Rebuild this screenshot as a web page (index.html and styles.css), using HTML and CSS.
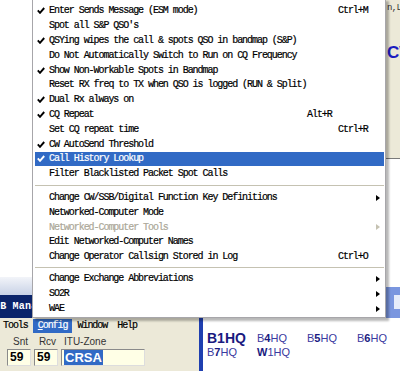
FILE: index.html
```html
<!DOCTYPE html>
<html lang="en">
    <head>
        <meta charset="UTF-8">
        <title>Config Menu</title>
        <link rel="stylesheet" href="styles.css">
    </head>
    <body>
        <div class="desktop">
            <!-- window peeking out on the right -->
            <div class="win side-win">
                <div class="side-text">n,L</div>
                <div class="side-mode">CW</div>
            </div>

            <!-- logging window -->
            <div class="win log-win">
                <div class="log-glow"></div>
                <div class="titlebar"><span class="title-text">DB Manager</span></div>
                <div class="menubar">
                    <span class="mb-item">Tools</span>
                    <span class="mb-item mb-active"><u>C</u>onfig</span>
                    <span class="mb-item">Window</span>
                    <span class="mb-item">Help</span>
                </div>
                <div class="entry">
                    <div class="field f-snt">
                        <span class="field-label">Snt</span>
                        <span class="field-box">59</span>
                    </div>
                    <div class="field f-rcv">
                        <span class="field-label">Rcv</span>
                        <span class="field-box">59</span>
                    </div>
                    <div class="field f-zone">
                        <span class="field-label">ITU-Zone</span>
                        <span class="field-box"><span class="sel">CRSA</span></span>
                    </div>
                </div>
            </div>

            <!-- check call window -->
            <div class="win call-win">
                <div class="call-title"><span class="call-btn"></span></div>
                <div class="call-body">
                    <div class="calls">
                        <span class="call big">B1HQ</span>
                        <span class="call">B<b>4</b>HQ</span>
                        <span class="call">B<b>5</b>HQ</span>
                        <span class="call">B<b>6</b>HQ</span>
                        <span class="call">B<b>7</b>HQ</span>
                        <span class="call"><b>W</b>1HQ</span>
                    </div>
                </div>
            </div>

            <!-- Config popup menu -->
            <div class="popup">
                <div class="mi"><span class="chk"></span><span class="lbl">Enter Sends Message (ESM mode)</span><span class="key">Ctrl+M</span></div>
                <div class="mi"><span></span><span class="lbl">Spot all S&amp;P QSO's</span><span></span></div>
                <div class="mi"><span class="chk"></span><span class="lbl">QSYing wipes the call &amp; spots QSO in bandmap (S&amp;P)</span><span></span></div>
                <div class="mi"><span></span><span class="lbl">Do Not Automatically Switch to Run on CQ Frequency</span><span></span></div>
                <div class="mi"><span class="chk"></span><span class="lbl">Show Non-Workable Spots in Bandmap</span><span></span></div>
                <div class="mi"><span></span><span class="lbl">Reset RX freq to TX when QSO is logged (RUN &amp; Split)</span><span></span></div>
                <div class="mi"><span class="chk"></span><span class="lbl">Dual Rx always on</span><span></span></div>
                <div class="mi"><span class="chk"></span><span class="lbl">CQ Repeat</span><span class="key key-early">Alt+R</span></div>
                <div class="mi"><span></span><span class="lbl">Set CQ repeat time</span><span class="key">Ctrl+R</span></div>
                <div class="mi"><span class="chk"></span><span class="lbl">CW AutoSend Threshold</span><span></span></div>
                <div class="mi mi-hot"><span class="chk"></span><span class="lbl">Call History Lookup</span><span></span></div>
                <div class="mi"><span></span><span class="lbl">Filter Blacklisted Packet Spot Calls</span><span></span></div>
                <div class="sep"></div>
                <div class="mi"><span></span><span class="lbl">Change CW/SSB/Digital Function Key Definitions</span><span class="sub"></span></div>
                <div class="mi"><span></span><span class="lbl">Networked-Computer Mode</span><span></span></div>
                <div class="mi mi-off"><span></span><span class="lbl">Networked-Computer Tools</span><span class="sub"></span></div>
                <div class="mi"><span></span><span class="lbl">Edit Networked-Computer Names</span><span></span></div>
                <div class="mi"><span></span><span class="lbl">Change Operator Callsign Stored in Log</span><span class="key">Ctrl+O</span></div>
                <div class="sep sep-2"></div>
                <div class="mi"><span></span><span class="lbl">Change Exchange Abbreviations</span><span class="sub"></span></div>
                <div class="mi"><span></span><span class="lbl">SO2R</span><span class="sub"></span></div>
                <div class="mi"><span></span><span class="lbl">WAE</span><span class="sub"></span></div>
            </div>
        </div>
    </body>
</html>
```

FILE: styles.css
```css
* {
    box-sizing: border-box;
}
body {
    margin: 0;
    background: #fff;
}
.desktop {
    position: relative;
    width: 400px;
    height: 371px;
    overflow: hidden;
    background: #fff;
    font-family: "Liberation Mono", monospace;
}
.win {
    position: absolute;
}

/* right hand window */
.side-win {
    left: 386px;
    top: 0;
    width: 30px;
    height: 159px;
    background: #ece9d8;
    border-bottom: 1px solid #7a7a7a;
}
.side-text {
    font-size: 9px;
    letter-spacing: -0.6px;
    color: #333;
    padding: 3px 0 0 1px;
}
.side-mode {
    font-family: "Liberation Sans", sans-serif;
    font-weight: bold;
    font-size: 17px;
    color: #1c1cc0;
    margin-top: 30px;
    padding-left: 1px;
}

/* logging window */
.log-win {
    left: 0;
    top: 277px;
    width: 200px;
    height: 94px;
    background: #ece9d8;
    display: flex;
    flex-direction: column;
}
.log-glow {
    height: 18px;
    background: linear-gradient(#f2f4f9, #c8d2e6);
}
.titlebar {
    height: 23px;
    background: #0a246a;
    display: flex;
    align-items: center;
}
.title-text {
    color: #fff;
    font-weight: bold;
    font-size: 10px;
    letter-spacing: 0.2px;
    margin-left: -6px;
    white-space: nowrap;
}
.menubar {
    height: 16px;
    display: flex;
    align-items: center;
    margin-left: -2px;
    font-size: 10px;
    letter-spacing: -1.05px;
    -webkit-text-stroke: 0.2px #000;
}
.mb-item {
    padding: 0 5px;
    height: 14px;
    line-height: 14px;
}
.mb-active {
    background: #316ac5;
    color: #fff;
    -webkit-text-stroke: 0.2px #fff;
}
.entry {
    display: flex;
    gap: 3px;
    padding: 2px 0 0 7px;
    font-family: "Liberation Sans", sans-serif;
}
.field {
    display: flex;
    flex-direction: column;
}
.field-label {
    font-size: 10px;
    color: #333;
    text-align: center;
    height: 13px;
    padding-left: 3px;
}
.field-box {
    height: 17px;
    background: #ffffe6;
    border: 1px solid #8a8a8a;
    border-right-color: #ddd;
    border-bottom-color: #ddd;
    font-size: 12px;
    font-weight: bold;
    padding-left: 2px;
    line-height: 15px;
}
.f-snt, .f-rcv {
    width: 24px;
}
.f-zone {
    width: 84px;
}
.f-zone .field-label {
    text-align: left;
}
.sel {
    background: #316ac5;
    color: #fff;
    padding: 0 1px;
    font-size: 13px;
}

/* check call window */
.call-win {
    left: 199px;
    top: 287px;
    width: 201px;
    height: 84px;
}
.call-title {
    height: 31px;
    background: #7a96df;
    position: relative;
}
.call-btn {
    position: absolute;
    right: 0;
    top: 8px;
    width: 6px;
    height: 14px;
    background: #e6ecfa;
}
.call-body {
    height: 53px;
    background: #fff;
    border-left: 4px solid #1f3fb0;
}
.calls {
    display: grid;
    grid-template-columns: repeat(4, 50px);
    padding: 13px 0 0 4px;
    font-family: "Liberation Sans", sans-serif;
    font-size: 11px;
    color: #3a3aa0;
    line-height: 14px;
}
.call b {
    color: #1a1a80;
}
.call.big {
    font-size: 14px;
    font-weight: bold;
    color: #1a1a80;
}

/* popup menu */
.popup {
    position: absolute;
    left: 32px;
    top: -2px;
    width: 354px;
    background: #fff;
    border: 1px solid #a7a6aa;
    padding: 4.6px 1px 1px 2px;
    box-shadow: 3px 3px 2px rgba(0, 0, 0, 0.28);
    font-size: 10px;
    letter-spacing: -1.05px;
    -webkit-text-stroke: 0.2px #000;
    color: #000;
}
.mi {
    display: grid;
    grid-template-columns: 14px 1fr 46px;
    align-items: center;
    height: 14.8px;
    white-space: nowrap;
}
.chk {
    width: 8px;
    height: 7px;
    margin-left: 2px;
    background: url("data:image/svg+xml;utf8,<svg xmlns='http://www.w3.org/2000/svg' viewBox='0 0 8 7'><path d='M0.8 3.4 L3 5.8 L7.2 1' fill='none' stroke='black' stroke-width='1.9'/></svg>") no-repeat;
}
.mi-hot {
    background: #316ac5;
    color: #fff;
    -webkit-text-stroke: 0.2px #fff;
}
.mi-hot .chk {
    background: url("data:image/svg+xml;utf8,<svg xmlns='http://www.w3.org/2000/svg' viewBox='0 0 8 7'><path d='M0.8 3.4 L3 5.8 L7.2 1' fill='none' stroke='white' stroke-width='1.9'/></svg>") no-repeat;
}
.mi-off {
    color: #aca899;
    -webkit-text-stroke: 0.2px #aca899;
}
.key-early {
    margin-left: -31px;
}
.sub {
    justify-self: end;
    margin-right: 4px;
    width: 0;
    height: 0;
    border-top: 3.5px solid transparent;
    border-bottom: 3.5px solid transparent;
    border-left: 4px solid #000;
}
.mi-off .sub {
    border-left-color: #c5c2b2;
}
.sep {
    height: 9px;
    display: flex;
    align-items: center;
}
.sep::before {
    content: "";
    flex: 1;
    border-top: 1px solid #c5c2b2;
}
.sep-2 {
    height: 7.4px;
}
```
